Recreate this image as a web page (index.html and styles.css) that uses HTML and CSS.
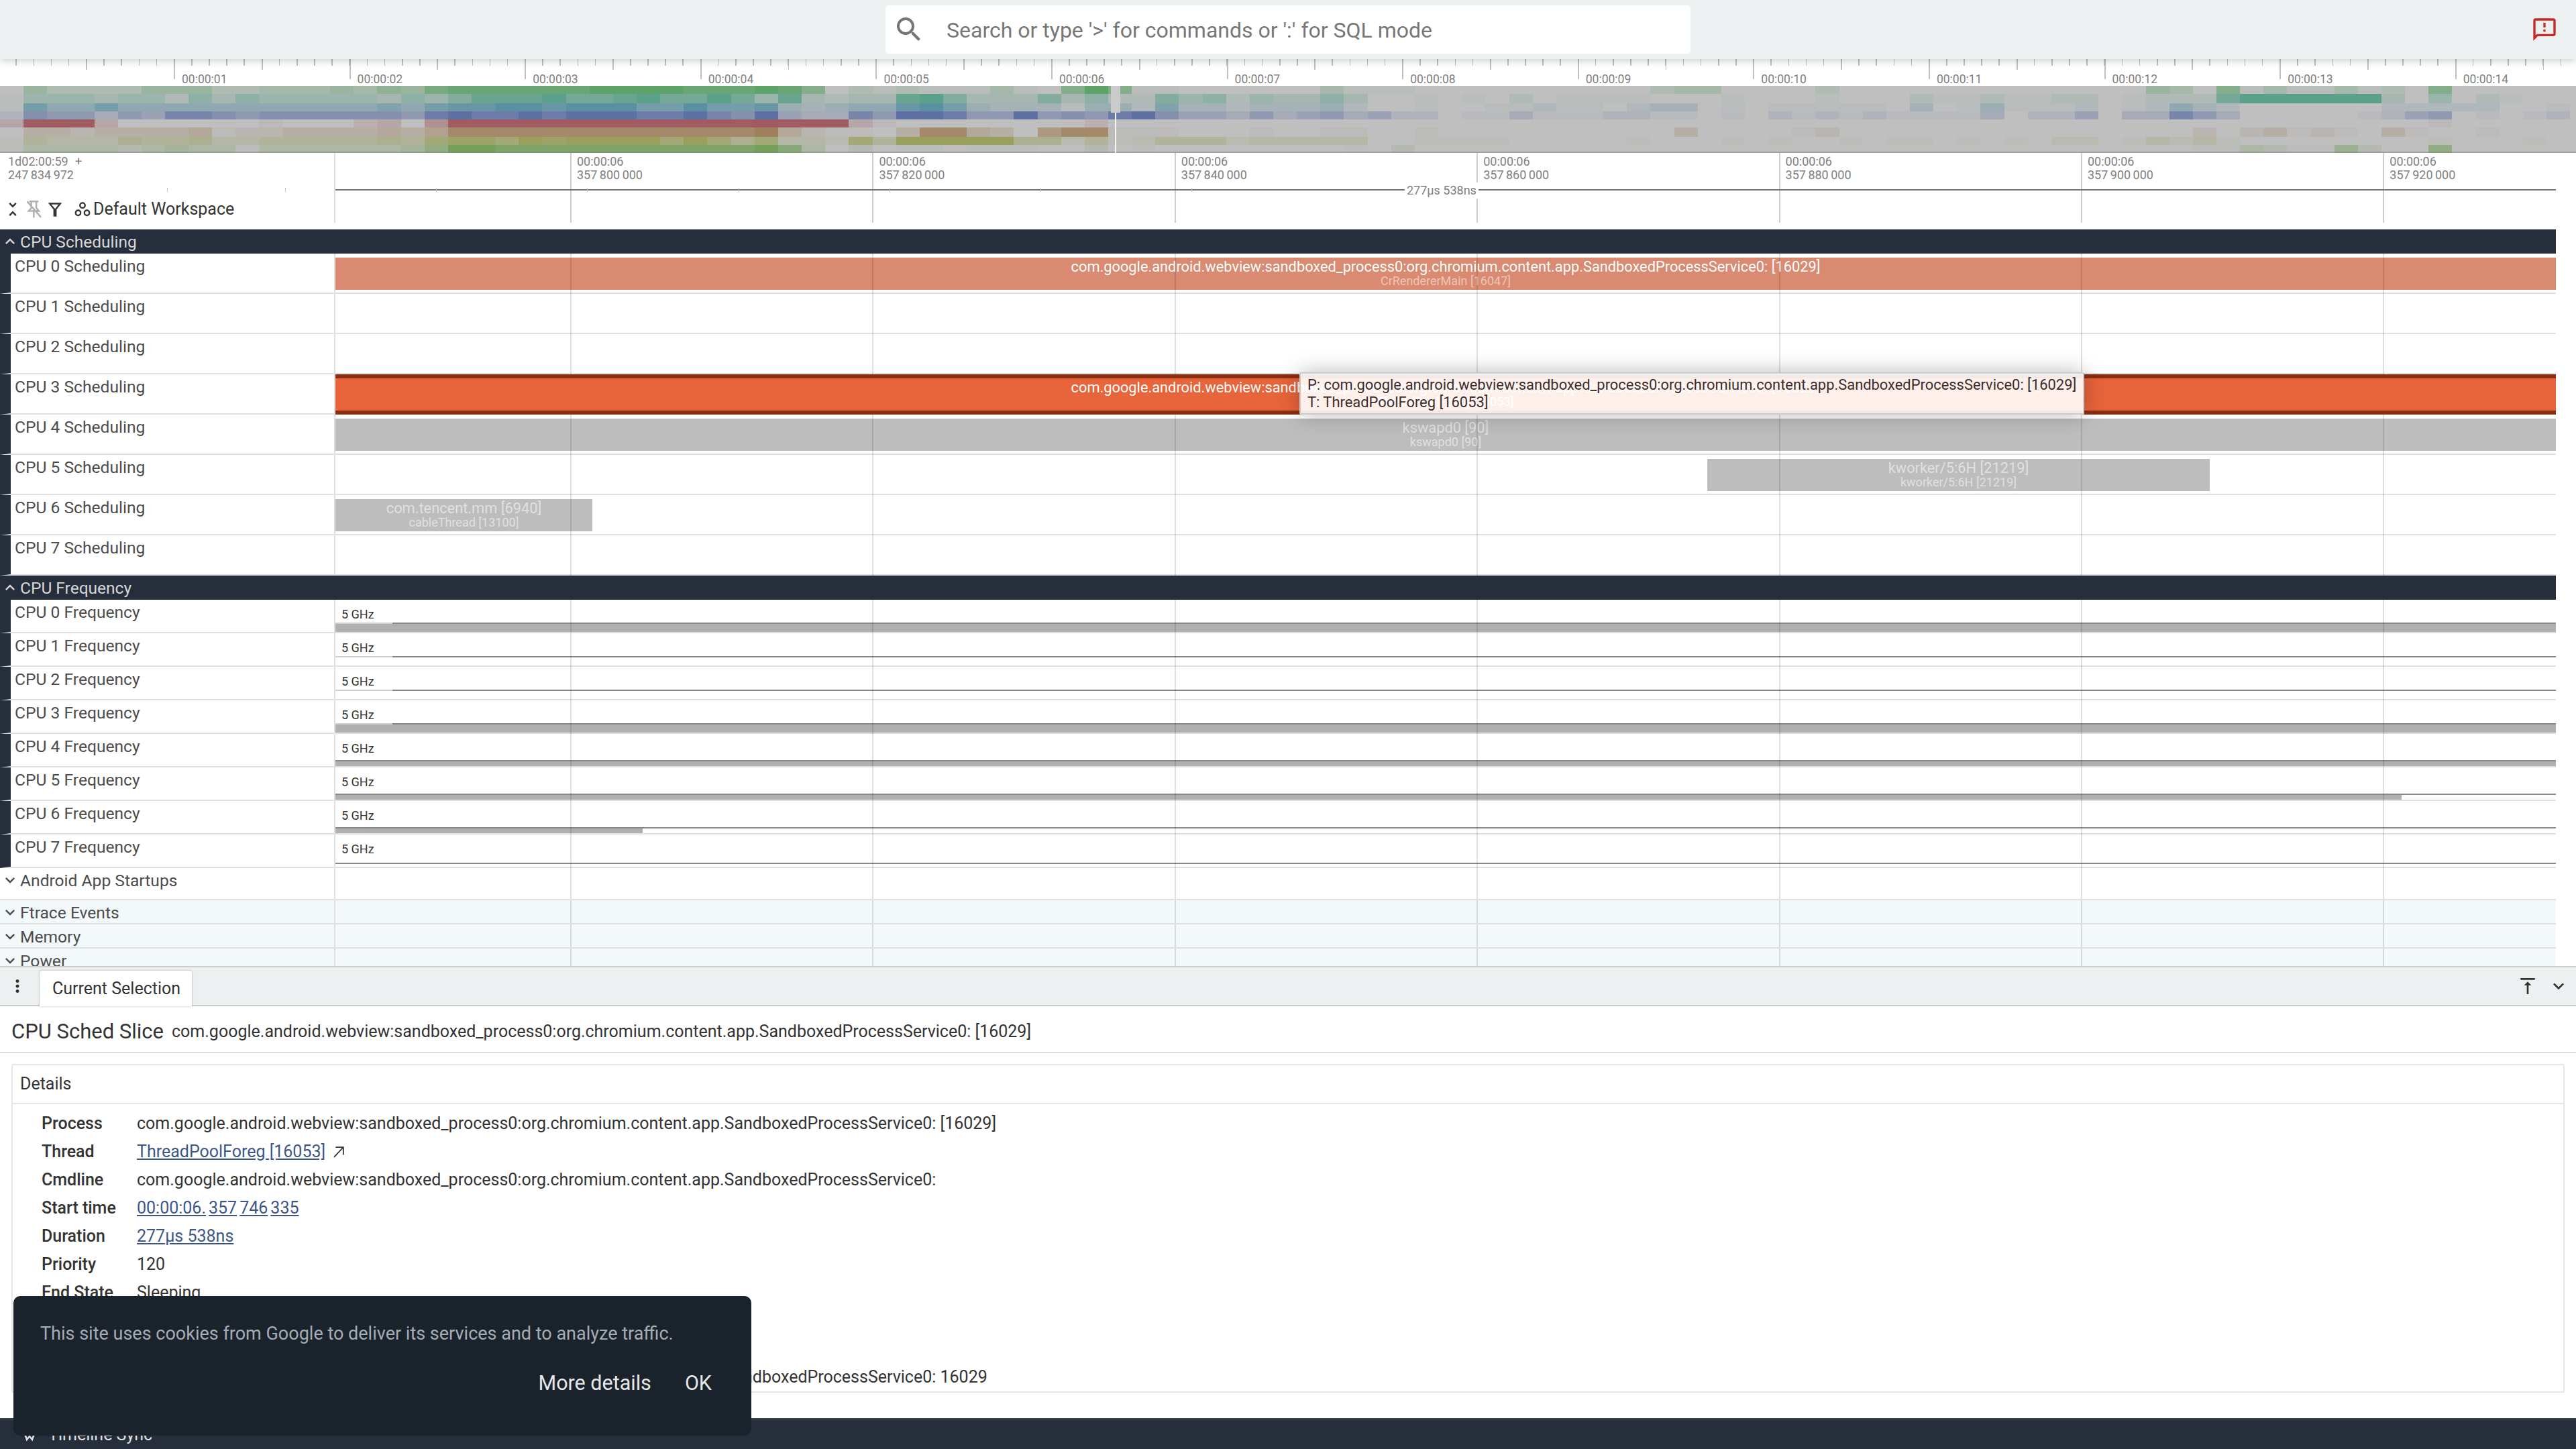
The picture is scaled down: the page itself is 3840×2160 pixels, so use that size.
FILE: index.html
```html
<!DOCTYPE html>
<html lang="en">

<head>
    <meta charset="UTF-8">
    <title>Perfetto UI</title>
    <link rel="stylesheet" href="styles.css">
</head>

<body>
    <header class="topbar">
        <div></div>
        <div class="search">
            <svg class="search-icon" viewBox="0 0 24 24"><path d="M15.5 14h-.79l-.28-.27C15.41 12.59 16 11.11 16 9.5 16 5.91 13.09 3 9.5 3S3 5.91 3 9.5 5.91 16 9.5 16c1.61 0 3.09-.59 4.23-1.57l.27.28v.79l5 4.99L20.49 19l-4.99-5zm-6 0C7.01 14 5 11.99 5 9.5S7.01 5 9.5 5 14 7.01 14 9.5 11.99 14 9.5 14z"/></svg>
            <span>Search or type '&gt;' for commands or ':' for SQL mode</span>
        </div>
        <svg class="feedback-icon" viewBox="0 0 24 24"><path d="M20 2H4c-1.1 0-1.99.9-1.99 2L2 22l4-4h14c1.1 0 2-.9 2-2V4c0-1.1-.9-2-2-2zm0 14H5.17L4 17.17V4h16v12zM11 12h2v2h-2zm0-6h2v4h-2z"/></svg>
    </header>

    <!-- overview of the whole trace -->
    <section class="overview-axis">
        <div class="ot">00:00:01</div>
        <div class="ot">00:00:02</div>
        <div class="ot">00:00:03</div>
        <div class="ot">00:00:04</div>
        <div class="ot">00:00:05</div>
        <div class="ot">00:00:06</div>
        <div class="ot">00:00:07</div>
        <div class="ot">00:00:08</div>
        <div class="ot">00:00:09</div>
        <div class="ot">00:00:10</div>
        <div class="ot">00:00:11</div>
        <div class="ot">00:00:12</div>
        <div class="ot">00:00:13</div>
        <div class="ot">00:00:14</div>
    </section>
    <section class="minimap">
        <canvas id="minimap-canvas" width="3840" height="100"></canvas>
        <div class="minimap-handle"></div>
        <div class="minimap-cursor"></div>
    </section>

    <!-- time ruler and workspace tools -->
    <section class="time-header">
        <div class="time-origin">
            <div class="origin-time">1d02:00:59 &nbsp;&nbsp;+<br>247 834 972</div>
            <div class="tools">
                <svg class="tool tool-unfold" viewBox="0 0 24 24"><path d="M7.41 18.59L8.83 20 12 16.83 15.17 20l1.41-1.41L12 14l-4.59 4.59zm9.18-13.18L15.17 4 12 7.17 8.83 4 7.41 5.41 12 10l4.59-4.59z"/></svg>
                <svg class="tool tool-pin" viewBox="0 0 24 24"><path d="M6 2.5h11M8.5 3v7.5L5.5 14h12l-3-3.5V3M11.5 14v8M3.5 2.5l16.5 19"/></svg>
                <svg class="tool tool-filter" viewBox="0 0 24 24"><path d="M2.5 3h19l-7.3 9.2V22h-4.4v-9.8zM7 5.2l5 6.2 5-6.2z" fill-rule="evenodd"/></svg>
                <svg class="tool tool-workspace" viewBox="0 0 24 24"><circle cx="12" cy="7" r="3.2"/><circle cx="6.4" cy="16.5" r="3.2"/><circle cx="17.6" cy="16.5" r="3.2"/></svg>
                <span>Default Workspace</span>
            </div>
        </div>
        <div class="ruler">
            <div class="rt">00:00:06<br>357 800 000</div>
            <div class="rt">00:00:06<br>357 820 000</div>
            <div class="rt">00:00:06<br>357 840 000</div>
            <div class="rt">00:00:06<br>357 860 000</div>
            <div class="rt">00:00:06<br>357 880 000</div>
            <div class="rt">00:00:06<br>357 900 000</div>
            <div class="rt">00:00:06<br>357 920 000</div>
            <div class="span-line"></div>
            <div class="span-label">277µs 538ns</div>
        </div>
        <div class="span-ticks"></div>
    </section>

    <main class="tracks">
        <div class="group-title">
            <svg class="chevron" viewBox="0 0 24 24"><path d="M12 8l-6 6 1.41 1.41L12 10.83l4.59 4.58L18 14z"/></svg>
            CPU Scheduling
        </div>
        <div class="track track-tall">
            <div class="track-label">CPU 0 Scheduling</div>
            <div class="track-body">
                <div class="slice slice-light slice-full">
                    <span>com.google.android.webview:sandboxed_process0:org.chromium.content.app.SandboxedProcessService0: [16029]</span>
                    <small>CrRendererMain [16047]</small>
                </div>
            </div>
        </div>
        <div class="track track-tall">
            <div class="track-label">CPU 1 Scheduling</div>
            <div class="track-body"></div>
        </div>
        <div class="track track-tall">
            <div class="track-label">CPU 2 Scheduling</div>
            <div class="track-body"></div>
        </div>
        <div class="track track-tall">
            <div class="track-label">CPU 3 Scheduling</div>
            <div class="track-body">
                <div class="slice slice-selected slice-full">
                    <span>com.google.android.webview:sandboxed_process0:org.chromium.content.app.SandboxedProcessService0: [16029]</span>
                    <small>ThreadPoolForeg [16053]</small>
                </div>
            </div>
        </div>
        <div class="track track-tall">
            <div class="track-label">CPU 4 Scheduling</div>
            <div class="track-body">
                <div class="slice slice-gray slice-full">
                    <span>kswapd0 [90]</span>
                    <small>kswapd0 [90]</small>
                </div>
            </div>
        </div>
        <div class="track track-tall">
            <div class="track-label">CPU 5 Scheduling</div>
            <div class="track-body">
                <div class="slice slice-gray" style="left: 2045px; width: 749px">
                    <span>kworker/5:6H [21219]</span>
                    <small>kworker/5:6H [21219]</small>
                </div>
            </div>
        </div>
        <div class="track track-tall">
            <div class="track-label">CPU 6 Scheduling</div>
            <div class="track-body">
                <div class="slice slice-gray" style="left: 0; width: 383px">
                    <span>com.tencent.mm [6940]</span>
                    <small>cableThread [13100]</small>
                </div>
            </div>
        </div>
        <div class="track track-tall">
            <div class="track-label">CPU 7 Scheduling</div>
            <div class="track-body"></div>
        </div>

        <div class="group-title">
            <svg class="chevron" viewBox="0 0 24 24"><path d="M12 8l-6 6 1.41 1.41L12 10.83l4.59 4.58L18 14z"/></svg>
            CPU Frequency
        </div>
        <div class="track">
            <div class="track-label">CPU 0 Frequency</div>
            <div class="track-body">
                <div class="ghz">5 GHz</div>
                <div class="freq freq-ramp" style="top: 34px"><div class="freq-fill"></div></div>
            </div>
        </div>
        <div class="track">
            <div class="track-label">CPU 1 Frequency</div>
            <div class="track-body">
                <div class="ghz">5 GHz</div>
                <div class="freq freq-ramp" style="top: 34px"></div>
            </div>
        </div>
        <div class="track">
            <div class="track-label">CPU 2 Frequency</div>
            <div class="track-body">
                <div class="ghz">5 GHz</div>
                <div class="freq freq-ramp" style="top: 34px"></div>
            </div>
        </div>
        <div class="track">
            <div class="track-label">CPU 3 Frequency</div>
            <div class="track-body">
                <div class="ghz">5 GHz</div>
                <div class="freq freq-ramp" style="top: 34px"><div class="freq-fill"></div></div>
            </div>
        </div>
        <div class="track">
            <div class="track-label">CPU 4 Frequency</div>
            <div class="track-body">
                <div class="ghz">5 GHz</div>
                <div class="freq" style="top: 39px"><div class="freq-fill"></div></div>
            </div>
        </div>
        <div class="track">
            <div class="track-label">CPU 5 Frequency</div>
            <div class="track-body">
                <div class="ghz">5 GHz</div>
                <div class="freq" style="top: 39px"><div class="freq-fill" style="width: 3080px"></div></div>
            </div>
        </div>
        <div class="track">
            <div class="track-label">CPU 6 Frequency</div>
            <div class="track-body">
                <div class="ghz">5 GHz</div>
                <div class="freq" style="top: 39px"><div class="freq-fill" style="width: 458px"></div></div>
            </div>
        </div>
        <div class="track">
            <div class="track-label">CPU 7 Frequency</div>
            <div class="track-body">
                <div class="ghz">5 GHz</div>
                <div class="freq" style="top: 42px"></div>
            </div>
        </div>

        <div class="fold fold-white">
            <div class="fold-label">
                <svg class="chevron" viewBox="0 0 24 24"><path d="M16.59 8.59L12 13.17 7.41 8.59 6 10l6 6 6-6z"/></svg>
                Android App Startups
            </div>
            <div class="track-body"></div>
        </div>
        <div class="fold">
            <div class="fold-label">
                <svg class="chevron" viewBox="0 0 24 24"><path d="M16.59 8.59L12 13.17 7.41 8.59 6 10l6 6 6-6z"/></svg>
                Ftrace Events
            </div>
            <div class="track-body"></div>
        </div>
        <div class="fold">
            <div class="fold-label">
                <svg class="chevron" viewBox="0 0 24 24"><path d="M16.59 8.59L12 13.17 7.41 8.59 6 10l6 6 6-6z"/></svg>
                Memory
            </div>
            <div class="track-body"></div>
        </div>
        <div class="fold">
            <div class="fold-label">
                <svg class="chevron" viewBox="0 0 24 24"><path d="M16.59 8.59L12 13.17 7.41 8.59 6 10l6 6 6-6z"/></svg>
                Power
            </div>
            <div class="track-body"></div>
        </div>
    </main>

    <div class="tooltip">
        P: com.google.android.webview:sandboxed_process0:org.chromium.content.app.SandboxedProcessService0: [16029]<br>
        T: ThreadPoolForeg [16053]
    </div>

    <nav class="tabbar">
        <svg class="kebab" viewBox="0 0 24 24"><path d="M12 8c1.1 0 2-.9 2-2s-.9-2-2-2-2 .9-2 2 .9 2 2 2zm0 2c-1.1 0-2 .9-2 2s.9 2 2 2 2-.9 2-2-.9-2-2-2zm0 6c-1.1 0-2 .9-2 2s.9 2 2 2 2-.9 2-2-.9-2-2-2z"/></svg>
        <div class="tab">Current Selection</div>
        <div class="tab-actions">
            <svg class="tab-icon" viewBox="0 0 24 24"><path d="M8 11h3v10h2V11h3l-4-4-4 4zM4 3v2h16V3H4z"/></svg>
            <svg class="tab-icon" viewBox="0 0 24 24"><path d="M16.59 8.59L12 13.17 7.41 8.59 6 10l6 6 6-6z"/></svg>
        </div>
    </nav>

    <section class="selection">
        <div class="selection-head">
            <h1>CPU Sched Slice</h1>
            <span>com.google.android.webview:sandboxed_process0:org.chromium.content.app.SandboxedProcessService0: [16029]</span>
        </div>
        <div class="card">
            <div class="card-title">Details</div>
            <dl class="details">
                <dt>Process</dt>
                <dd>com.google.android.webview:sandboxed_process0:org.chromium.content.app.SandboxedProcessService0: [16029]</dd>
                <dt>Thread</dt>
                <dd><a href="#">ThreadPoolForeg [16053]</a>
                    <svg class="call-made" viewBox="0 0 24 24"><path d="M5.5 20.5L20 5M8 4.5h12.5V17"/></svg>
                </dd>
                <dt>Cmdline</dt>
                <dd>com.google.android.webview:sandboxed_process0:org.chromium.content.app.SandboxedProcessService0:</dd>
                <dt>Start time</dt>
                <dd><a href="#">00:00:06.</a><a href="#" class="group">357</a><a href="#" class="group">746</a><a href="#" class="group">335</a></dd>
                <dt>Duration</dt>
                <dd><a href="#">277µs 538ns</a></dd>
                <dt>Priority</dt>
                <dd>120</dd>
                <dt>End State</dt>
                <dd>Sleeping</dd>
                <dt class="details-gap"></dt>
                <dd class="details-gap"></dd>
                <dt></dt>
                <dd>com.google.android.webview:sandboxed_process0:org.chromium.content.app.SandboxedProcessService0: 16029</dd>
            </dl>
        </div>
    </section>

    <footer class="statusbar">
        <svg class="sync-icon" viewBox="0 0 24 24"><path d="M3 6l5 14 4-5 4 5 5-14"/></svg>
        <span>Timeline Sync</span>
    </footer>

    <div class="cookie">
        <p>This site uses cookies from Google to deliver its services and to analyze traffic.</p>
        <div class="cookie-actions">
            <span>More details</span>
            <span>OK</span>
        </div>
    </div>

    <script src="script.js"></script>
</body>

</html>
```

FILE: styles.css
```css
* {
    margin: 0;
    padding: 0;
    box-sizing: border-box;
}

body {
    position: relative;
    width: 3840px;
    height: 2160px;
    display: flex;
    flex-direction: column;
    overflow: hidden;
    background-color: #fff;
    font-family: Roboto, "Liberation Sans", sans-serif;
    color: #333;
}

/* Top bar */
.topbar {
    position: relative;
    z-index: 3;
    height: 88px;
    flex: none;
    display: grid;
    grid-template-columns: 1fr 1200px 1fr;
    align-items: center;
    background-color: #ecf0f1;
    box-shadow: 0 2px 12px rgba(0, 0, 0, 0.22);
}

.search {
    height: 72px;
    display: flex;
    align-items: center;
    gap: 32px;
    padding-left: 11px;
    background-color: #fff;
    border-radius: 4px;
    color: #777;
    font-size: 32px;
}

.search span {
    padding-top: 2px;
}

.search-icon {
    width: 48px;
    height: 48px;
    fill: #757575;
}

.feedback-icon {
    justify-self: end;
    width: 40px;
    height: 40px;
    margin-right: 27px;
    fill: #c62828;
}

/* Overview */
.overview-axis {
    height: 40px;
    flex: none;
    display: flex;
    padding-left: 259px;
    background-image:
        repeating-linear-gradient(90deg, #c0c0c0 23.4px, #c0c0c0 25px, transparent 25px, transparent 49.56px),
        repeating-linear-gradient(90deg, #c0c0c0 128.2px, #c0c0c0 130px, transparent 130px, transparent 259px);
    background-size: 100% 10px, 100% 16px;
    background-repeat: no-repeat;
}

.ot {
    position: relative;
    flex: none;
    width: 261.6px;
    padding: 19px 0 0 12px;
    font-size: 17.5px;
    line-height: 22px;
    color: #808080;
    background-color: #fff;
    background-clip: content-box;
}

.ot::before {
    content: "";
    position: absolute;
    left: 0;
    top: 0;
    width: 2px;
    height: 30px;
    background-color: #c0c0c0;
}

.minimap {
    position: relative;
    height: 100px;
    flex: none;
}

#minimap-canvas {
    display: block;
}

.minimap-handle {
    position: absolute;
    left: 1656px;
    top: 0;
    width: 14px;
    height: 40px;
    background-color: #cbcbcb;
}

.minimap-cursor {
    position: absolute;
    left: 1662px;
    top: 40px;
    width: 2px;
    height: 60px;
    background-color: #f4f4f4;
}

/* Time header */
.time-header {
    position: relative;
    height: 114px;
    flex: none;
    display: flex;
}

.time-origin {
    width: 500px;
    height: 104px;
    flex: none;
    border-right: 2px solid #ddd;
    display: flex;
    flex-direction: column;
    justify-content: space-between;
    padding-top: 3px;
}

.origin-time {
    padding-left: 12px;
    font-size: 18px;
    line-height: 20px;
    word-spacing: -1px;
    color: #808080;
}

.tools {
    display: flex;
    align-items: center;
    padding: 0 0 3px 4px;
    height: 38px;
    font-size: 25px;
    color: #333;
}

.tool {
    flex: none;
    width: 30px;
    height: 30px;
    fill: #333;
}

.tool-pin {
    margin-left: 2px;
    fill: none;
    stroke: #b0b0b0;
    stroke-width: 2px;
}

.tool-filter {
    margin-left: 3px;
    width: 26px;
    height: 26px;
}

.tool-workspace {
    margin-left: 14px;
    margin-right: 2px;
    width: 28px;
    height: 28px;
    fill: none;
    stroke: #333;
    stroke-width: 2px;
}

.ruler {
    position: relative;
    flex: 1;
    max-width: 3310px;
    height: 104px;
    display: flex;
    padding-left: 350px;
}

.rt {
    flex: none;
    width: 450.4px;
    padding: 3px 0 0 8px;
    border-left: 2px solid #ccc;
    font-size: 18px;
    line-height: 20px;
    word-spacing: -1px;
    color: #808080;
}

.span-line {
    position: absolute;
    left: 0;
    right: 0;
    top: 54px;
    height: 2px;
    background-color: #777;
}

.span-label {
    position: absolute;
    left: 1594px;
    top: 44px;
    padding: 0 3px;
    background-color: #fff;
    font-size: 18px;
    line-height: 24px;
    color: #808080;
}

.span-ticks {
    position: absolute;
    left: 425px;
    top: 52px;
    width: 1355px;
    height: 6px;
    background-image: repeating-linear-gradient(90deg, #c4c4c4 0, #c4c4c4 1px, transparent 1px, transparent 225.2px);
}

.span-ticks::before {
    content: "";
    position: absolute;
    left: -176px;
    top: 0;
    width: 1px;
    height: 6px;
    background-color: #c4c4c4;
}

/* Tracks */
.tracks {
    position: relative;
    width: 3810px;
    height: 1098px;
    flex: none;
    overflow: hidden;
}

.group-title {
    height: 36px;
    display: flex;
    align-items: center;
    padding-left: 1px;
    gap: 1px;
    background-color: #262e3c;
    color: #d8d8d8;
    font-size: 24.5px;
}

.chevron {
    flex: none;
    width: 28px;
    height: 28px;
    fill: currentColor;
}

.track {
    height: 50px;
    display: flex;
    border-left: 16px solid #262e3c;
    border-bottom: 2px solid #e0e0e0;
}

.track-tall {
    height: 60px;
}

.track-label {
    width: 484px;
    flex: none;
    padding: 3px 0 0 6px;
    border-right: 2px solid #e0e0e0;
    font-size: 24.6px;
    line-height: 32px;
    color: #4c4c4c;
}

.track-body {
    position: relative;
    flex: 1;
}

/* gridlines sit over the slices */
.track-body::after {
    content: "";
    position: absolute;
    left: 0;
    right: 0;
    top: 0;
    bottom: -2px;
    background-image: repeating-linear-gradient(90deg, rgba(0, 0, 0, 0.12) 350px, rgba(0, 0, 0, 0.12) 352px, transparent 352px, transparent 800.4px);
    pointer-events: none;
}

.slice {
    position: absolute;
    top: 6px;
    height: 48px;
    padding-top: 3px;
    display: flex;
    flex-direction: column;
    align-items: center;
    white-space: nowrap;
    overflow: hidden;
}

.slice span {
    font-size: 21.8px;
    line-height: 22px;
}

.slice small {
    font-size: 18px;
    line-height: 20px;
}

.slice-full {
    left: 0;
    right: 0;
}

.slice-light {
    background-color: #d98a70;
    color: #fff;
}

.slice-light small {
    color: #f0c4b6;
}

/* selected slice hides the gridlines */
.slice-selected {
    top: 0;
    z-index: 1;
    height: 60px;
    background-color: #e8643a;
    border-top: 6px solid #8a2d10;
    border-bottom: 6px solid #8a2d10;
    color: #fff;
}

.slice-gray {
    background-color: #bdbdbd;
    color: #e0e0e0;
}

.ghz {
    position: absolute;
    left: 9px;
    top: 11px;
    z-index: 1;
    font-size: 18px;
    line-height: 22px;
    color: #333;
}

.freq {
    position: absolute;
    left: 0;
    right: 0;
    bottom: 0;
    border-top: 2px solid #888;
}

.freq-ramp::before {
    content: "";
    position: absolute;
    left: 0;
    top: -2px;
    width: 85px;
    height: 2px;
    background-color: #d0d0d0;
}

.freq-fill {
    height: 100%;
    background-color: #b0b0b0;
}

.fold {
    height: 36px;
    display: flex;
    border-bottom: 2px solid #e0e0e0;
    background-color: #f3f8fb;
}

.fold-white {
    height: 48px;
    background-color: #fff;
}

.fold-label {
    width: 500px;
    flex: none;
    display: flex;
    align-items: flex-start;
    gap: 1px;
    padding: 4px 0 0 1px;
    border-right: 2px solid #e0e0e0;
    font-size: 24.6px;
    line-height: 30px;
    color: #4c4c4c;
}

.fold .track-body::after {
    bottom: 0;
}

/* Hover tooltip over the tracks */
.tooltip {
    position: absolute;
    left: 1937px;
    top: 555px;
    z-index: 2;
    width: 1170px;
    height: 63px;
    padding: 4px 10px;
    background-color: rgba(255, 255, 255, 0.9);
    border: 2px solid #ccc;
    border-radius: 2px;
    box-shadow: 0 0 32px rgba(0, 0, 0, 0.28);
    font-size: 21.9px;
    line-height: 26px;
    color: #3c2b2b;
    white-space: nowrap;
}

/* Bottom tabs */
.tabbar {
    position: relative;
    z-index: 1;
    height: 60px;
    flex: none;
    display: flex;
    align-items: flex-end;
    background-color: #ecf0f1;
    border-top: 2px solid #ccc;
    border-bottom: 2px solid #ccc;
}

.kebab {
    align-self: center;
    width: 30px;
    height: 30px;
    margin: 0 18px 0 11px;
    fill: #333;
}

.tab {
    width: 227px;
    height: 53px;
    margin-bottom: -2px;
    padding-left: 19px;
    background-color: #fff;
    border-radius: 4px 4px 0 0;
    box-shadow: 0 0 3px rgba(0, 0, 0, 0.3);
    font-size: 25px;
    line-height: 54px;
    color: #333;
}

.tab-actions {
    align-self: center;
    margin-left: auto;
    display: flex;
    align-items: center;
    gap: 14px;
    padding-right: 10px;
}

.tab-icon {
    width: 32px;
    height: 32px;
    fill: #333;
}

/* Current selection */
.selection {
    flex: 1;
    min-height: 0;
    overflow: hidden;
}

.selection-head {
    height: 70px;
    display: flex;
    align-items: center;
    gap: 12px;
    padding: 6px 0 0 17px;
    border-bottom: 2px solid #ddd;
    font-size: 25px;
}

.selection-head h1 {
    font-size: 31px;
    font-weight: 400;
}

.card {
    margin: 16px 17px;
    border: 2px solid #e6e6e6;
    border-radius: 2px;
}

.card-title {
    height: 58px;
    padding-left: 11px;
    border-bottom: 2px solid #e6e6e6;
    font-size: 25px;
    line-height: 56px;
}

.details {
    display: grid;
    grid-template-columns: 142px 1fr;
    grid-auto-rows: 42px;
    padding: 8px 0 0 43px;
    font-size: 25px;
    line-height: 42px;
}

.details dt {
    font-weight: 500;
}

.details-gap {
    height: 84px;
    grid-row: span 2;
}

.details a {
    color: #3d5688;
}

.details .group {
    margin-left: 4px;
}

.call-made {
    width: 22px;
    height: 22px;
    margin-left: 2px;
    vertical-align: -3px;
    fill: none;
    stroke: #333;
    stroke-width: 2px;
}

/* Status bar */
.statusbar {
    height: 46px;
    flex: none;
    display: flex;
    align-items: center;
    gap: 16px;
    padding-left: 32px;
    background-color: #262e3c;
    border-top: 2px solid #3a4350;
    color: #e0e0e0;
    font-size: 25px;
}

.sync-icon {
    width: 24px;
    height: 24px;
    fill: none;
    stroke: #e0e0e0;
    stroke-width: 2.5px;
}

/* Cookie banner */
.cookie {
    position: absolute;
    left: 20px;
    top: 1932px;
    z-index: 4;
    width: 1100px;
    height: 208px;
    padding: 40px 40px;
    background-color: #1a222c;
    border-radius: 10px;
    font-size: 27px;
    color: #a6acb3;
}

.cookie-actions {
    margin-top: 40px;
    display: flex;
    justify-content: flex-end;
    gap: 50px;
    padding-right: 19px;
    font-size: 30.5px;
    color: #e8e8e8;
}
```

FILE: script.js
```js
// minimap heat cells, one digit (0-9) per column for each cpu row
const rows = [
    { color: [93, 162, 104], cells: '0422224442233343547888888999988898602' + '1211131069611000000311100000000002330' + '000200000000000004306131131206000000' },
    { color: [91, 160, 138], cells: '1444344253544444354688897789779748323' + '3896333635226452433530010102011110001' + '000100021121122012227999999304021000' },
    { color: [90, 144, 162], cells: '1755755555555555657889989997797784345' + '5897433314426332333420010011211023301' + '011111030141112012532000000222220010' },
    { color: [95, 112, 163], cells: '2655354776566666658988989998897694337' + '5998559565896443534534220113111221101' + '021212111130224033753000001245010120' },
    { color: [160, 92, 96], cells: '3999300000010002305999999999999999993' + '1000000002000000000000000000000000000' + '000000000000000000000000000001000000' },
    { color: [160, 128, 92], cells: '0332333341223333435888888888888894211' + '0388430688111000100110010000000000300' + '001200000000000000020231210310010000' },
    { color: [152, 160, 92], cells: '1433354453344444547887989999797573327' + '4999995524124442333330011110000010001' + '010010110101022013231000000001000100' },
    { color: [116, 160, 92], cells: '1333323433133333346998888888888897302' + '0110111002010000000010200000000000000' + '000000000000000000011321152006000000' }
];

const rowTops = [0, 12, 26, 38, 50, 62, 76, 88, 100];
const cellWidth = 3840 / 109.25;
const gray = [191, 191, 191];

const canvas = document.getElementById('minimap-canvas');
const ctx = canvas.getContext('2d');

rows.forEach((row, r) => {
    for (let i = 0; i < row.cells.length; i++) {
        const t = Math.pow(Number(row.cells[i]) / 9, 1.25);
        const mix = gray.map((g, c) => Math.round(g + (row.color[c] - g) * t));
        const left = Math.round(i * cellWidth);
        const right = Math.round((i + 1) * cellWidth);
        ctx.fillStyle = `rgb(${mix.join(',')})`;
        ctx.fillRect(left, rowTops[r], right - left, rowTops[r + 1] - rowTops[r]);
    }
});

ctx.fillStyle = 'rgba(120, 120, 120, 0.4)';
ctx.fillRect(0, 98, 3840, 2);
```
